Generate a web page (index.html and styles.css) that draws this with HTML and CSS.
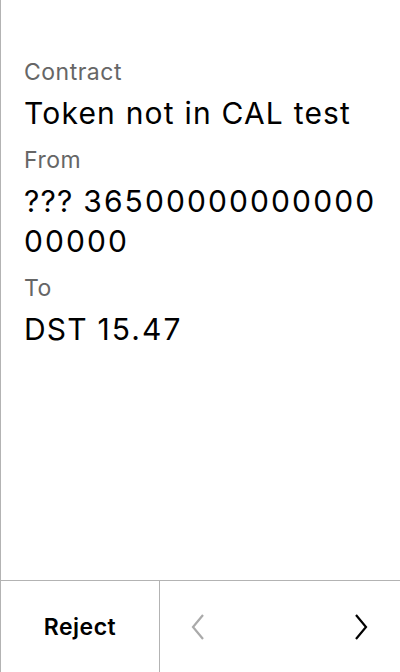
FILE: index.html
```html
<!DOCTYPE html>
<html>
<head>
<meta charset="utf-8">
<link rel="stylesheet" href="styles.css">
</head>
<body>
<div class="screen">
  <main class="content">
    <div class="field">
      <div class="label">Contract</div>
      <div class="value">Token not in CAL test</div>
    </div>
    <div class="field">
      <div class="label">From</div>
      <div class="value">??? <span class="num">3650000000000000000</span></div>
    </div>
    <div class="field">
      <div class="label">To</div>
      <div class="value">DST <span class="num">15.47</span></div>
    </div>
  </main>
  <footer class="footer">
    <div class="reject">Reject</div>
    <div class="nav">
      <svg class="chev" width="14" height="26" viewBox="0 0 14 26"><path d="M12 1 L2 13 L12 25" fill="none" stroke="#aaaaaa" stroke-width="2.2"/></svg>
      <svg class="chev" width="14" height="26" viewBox="0 0 14 26"><path d="M2 1 L12 13 L2 25" fill="none" stroke="#000" stroke-width="2.2"/></svg>
    </div>
  </footer>
</div>
</body>
</html>
```
FILE: styles.css
```css
* { box-sizing: border-box; }
html, body { margin: 0; padding: 0; background: #fff; }
body { font-family: Inter, "Noto Sans", sans-serif; color: #000; }
.screen {
  width: 400px;
  height: 672px;
  border-left: 1px solid #b3b3b3;
  display: flex;
  flex-direction: column;
}
.content {
  flex: 1;
  padding: 58px 10px 0 23px;
}
.field { margin-bottom: 13px; }
.label {
  font-size: 23px;
  letter-spacing: 0.5px;
  line-height: 28px;
  color: #666;
  margin-bottom: 7px;
}
.value {
  font-size: 30px;
  letter-spacing: 1.2px;
  line-height: 40px;
  word-break: break-all;
}
.num { letter-spacing: 2.1px; }
.footer {
  height: 92px;
  border-top: 1px solid #b3b3b3;
  display: flex;
}
.reject {
  width: 159px;
  border-right: 1px solid #b3b3b3;
  display: flex;
  align-items: center;
  justify-content: center;
  font-size: 23px;
  letter-spacing: 0.5px;
  font-weight: 600;
}
.nav {
  flex: 1;
  display: flex;
  align-items: center;
  justify-content: space-between;
  padding: 0 32px 0 31px;
}
.chev { display: block; }
```
